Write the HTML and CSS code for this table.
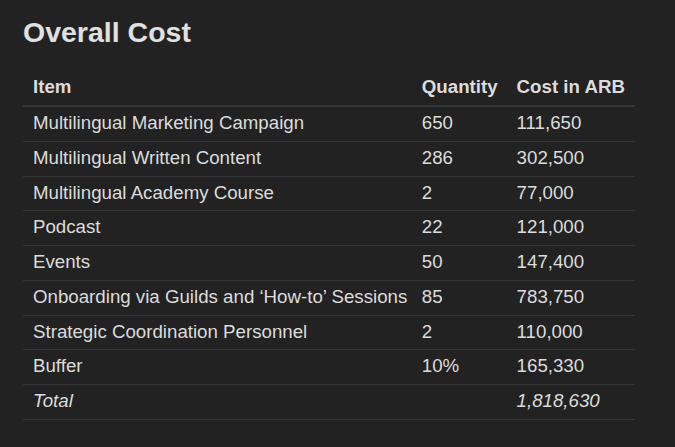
FILE: index.html
```html
<!DOCTYPE html>
<html>
<head>
<meta charset="utf-8">
<link rel="stylesheet" href="styles.css">
</head>
<body>
<main class="page">
  <h2 class="title">Overall Cost</h2>
  <table class="cost-table">
    <thead>
      <tr><th>Item</th><th>Quantity</th><th>Cost in ARB</th></tr>
    </thead>
    <tbody>
      <tr><td>Multilingual Marketing Campaign</td><td>650</td><td>111,650</td></tr>
      <tr><td>Multilingual Written Content</td><td>286</td><td>302,500</td></tr>
      <tr><td>Multilingual Academy Course</td><td>2</td><td>77,000</td></tr>
      <tr><td>Podcast</td><td>22</td><td>121,000</td></tr>
      <tr><td>Events</td><td>50</td><td>147,400</td></tr>
      <tr><td>Onboarding via Guilds and ‘How-to’ Sessions</td><td>85</td><td>783,750</td></tr>
      <tr><td>Strategic Coordination Personnel</td><td>2</td><td>110,000</td></tr>
      <tr><td>Buffer</td><td>10%</td><td>165,330</td></tr>
      <tr class="total"><td>Total</td><td></td><td>1,818,630</td></tr>
    </tbody>
  </table>
</main>
</body>
</html>
```
FILE: styles.css
```css
html, body {
  margin: 0;
  padding: 0;
  background: #222222;
}
body {
  font-family: "Liberation Sans", Arial, sans-serif;
  color: #dcdcdc;
}
.page {
  padding: 14px 23px 20px;
}
.title {
  margin: 0 0 20px;
  font-size: 28.5px;
  font-weight: bold;
  color: #e0e0e0;
  line-height: 36px;
}
.cost-table {
  border-collapse: collapse;
  font-size: 18.7px;
}
.cost-table th {
  text-align: left;
  font-weight: bold;
  padding: 6px 10px 7px;
  line-height: 22px;
  border-bottom: 2px solid #363636;
}
.cost-table td {
  padding: 6px 10px 7px;
  line-height: 20.75px;
  border-bottom: 1px solid #353535;
}
.cost-table td:first-child,
.cost-table th:first-child {
  padding-right: 4.5px;
}
.cost-table th:nth-child(2),
.cost-table td:nth-child(2) {
  padding-right: 9px;
}
.total td {
  font-style: italic;
}
```
